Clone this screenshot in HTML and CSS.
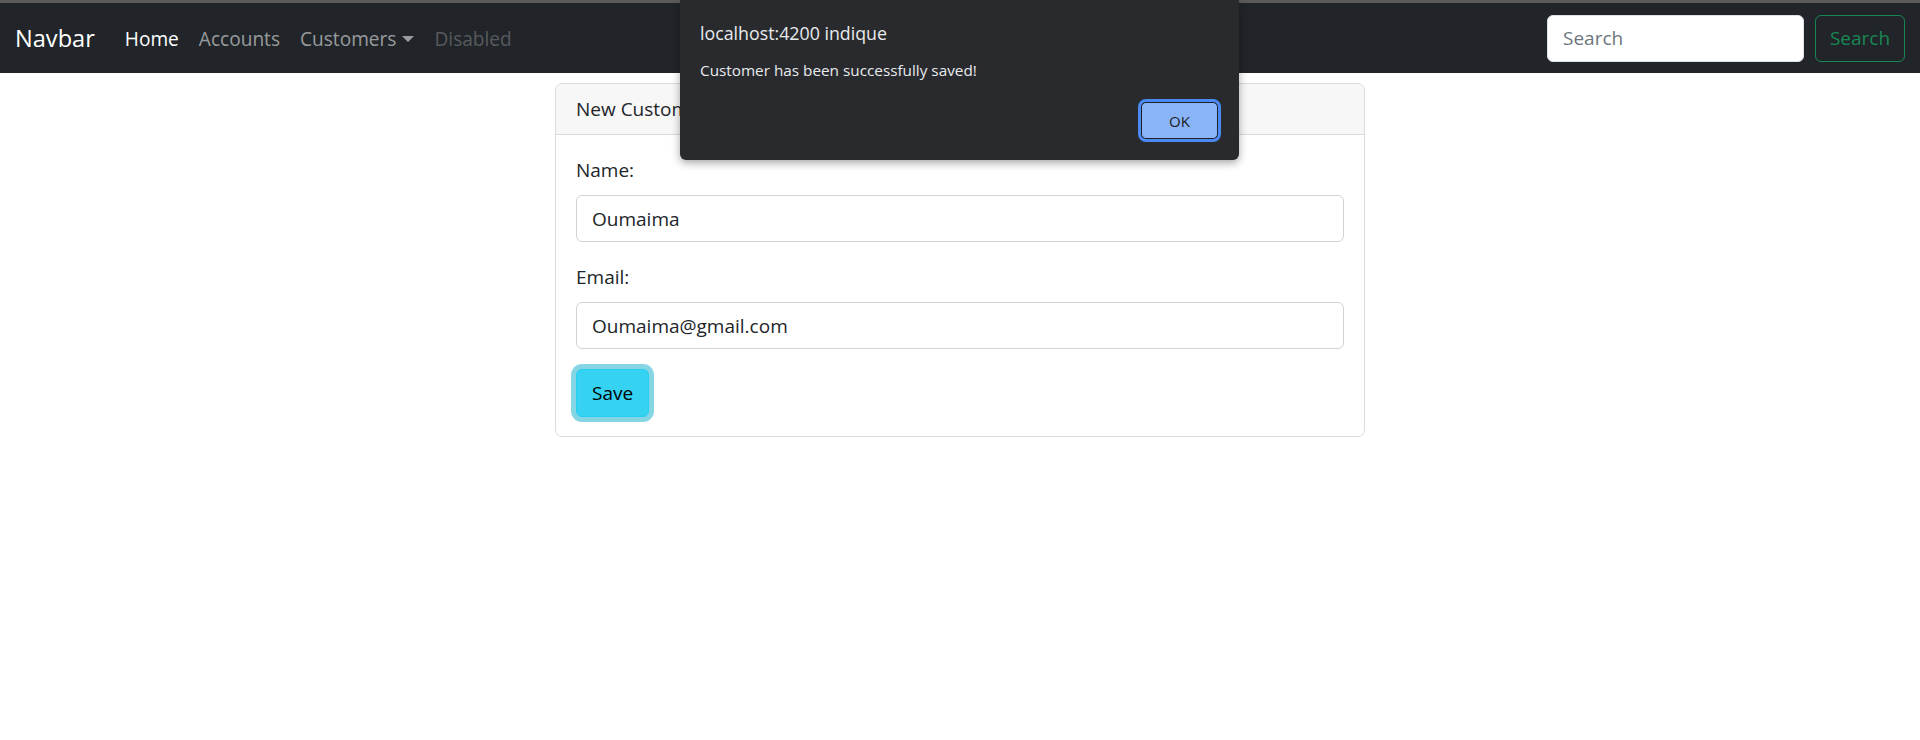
FILE: index.html
```html
<!DOCTYPE html>
<html lang="fr">
<head>
<meta charset="utf-8">
<title>Customers</title>
<link rel="stylesheet" href="styles.css">
</head>
<body>
<div class="chrome-top"></div>
<nav class="navbar">
  <a class="brand" href="#">Navbar</a>
  <ul class="nav">
    <li><a class="nav-link active" href="#">Home</a></li>
    <li><a class="nav-link" href="#">Accounts</a></li>
    <li><a class="nav-link dropdown-toggle" href="#">Customers</a></li>
    <li><a class="nav-link disabled">Disabled</a></li>
  </ul>
  <form class="search">
    <input class="search-input" type="search" placeholder="Search">
    <button class="btn-outline-success" type="button">Search</button>
  </form>
</nav>
<main class="page">
  <div class="card">
    <div class="card-header">New Customer</div>
    <div class="card-body">
      <form>
        <div class="field">
          <label class="form-label">Name:</label>
          <input class="form-control" type="text" value="Oumaima">
        </div>
        <div class="field">
          <label class="form-label">Email:</label>
          <input class="form-control" type="text" value="Oumaima@gmail.com">
        </div>
        <button class="btn-save" type="button">Save</button>
      </form>
    </div>
  </div>
</main>
<div class="alert-dialog">
  <div class="alert-title">localhost:4200 indique</div>
  <div class="alert-message">Customer has been successfully saved!</div>
  <div class="alert-actions">
    <button class="alert-ok" type="button">OK</button>
  </div>
</div>
</body>
</html>
```
FILE: styles.css
```css
* { box-sizing: border-box; }
html, body { margin: 0; padding: 0; }
body {
  font-family: "Open Sans", "Noto Sans", sans-serif;
  font-size: 19px;
  line-height: 30px;
  color: #212529;
  background: #fff;
  width: 1920px;
  height: 740px;
  overflow: hidden;
  position: relative;
}
.chrome-top { height: 3px; background: #5b5b5b; }
.navbar {
  height: 70px;
  background: #212529;
  display: flex;
  align-items: center;
  padding: 11px 15px 9px;
}
.brand {
  color: #fff;
  text-decoration: none;
  font-size: 23.6px;
  line-height: 37.5px;
  padding: 6px 0;
  margin-right: 20px;
}
.nav { list-style: none; margin: 0; padding: 0; display: flex; font-size: 19.1px; }
.nav-link {
  display: flex;
  align-items: center;
  padding: 10px 10px;
  color: rgba(255,255,255,.55);
  text-decoration: none;
}
.nav-link.active { color: #fff; }
.nav-link.disabled { color: rgba(255,255,255,.25); }
.dropdown-toggle::after {
  content: "";
  display: inline-block;
  margin-left: 6px;
  border-top: 6px solid rgba(255,255,255,.55);
  border-left: 6px solid transparent;
  border-right: 6px solid transparent;
}
.search { margin-left: auto; display: flex; gap: 11px; margin-top: -2px; }
.search-input {
  width: 257px;
  height: 47px;
  border: 1px solid #dee2e6;
  border-radius: 6px;
  padding: 7px 15px;
  font: inherit;
  color: #212529;
  background: #fff;
}
.search-input::placeholder { color: #6c757d; }
.btn-outline-success {
  height: 47px;
  width: 90px;
  background: transparent;
  border: 1px solid #198754;
  border-radius: 6px;
  color: #198754;
  font: inherit;
  padding: 0;
}
.page { padding-top: 10px; }
.card {
  width: 810px;
  margin: 0 auto;
  border: 1px solid #dadbdc;
  border-radius: 7px;
  overflow: hidden;
}
.card-header {
  background: #f7f7f7;
  border-bottom: 1px solid #dadbdc;
  padding: 10px 20px;
}
.card-body { padding: 20px 20px 19px; }
.field { margin-bottom: 20px; }
.form-label { display: block; margin-bottom: 10px; }
.form-control {
  display: block;
  width: 100%;
  height: 47px;
  padding: 7px 15px;
  font: inherit;
  color: #212529;
  border: 1px solid #ced4da;
  border-radius: 6px;
  background: #fff;
}
.btn-save {
  display: block;
  height: 48px;
  padding: 0 15px;
  font: inherit;
  color: #000;
  background: #35d3f1;
  border: 1px solid #25cff2;
  border-radius: 6px;
  box-shadow: 0 0 0 5px rgba(11,172,204,.5);
}
.alert-dialog {
  position: absolute;
  top: 0;
  left: 680px;
  width: 559px;
  height: 160px;
  background: #292a2d;
  border-radius: 0 0 6px 6px;
  box-shadow: 0 3px 8px rgba(0,0,0,.35);
  padding: 20px 21px 21px 20px;
  color: #e8eaed;
  z-index: 10;
  display: flex;
  flex-direction: column;
}
.alert-title { font-size: 17.8px; line-height: 26px; }
.alert-message { font-size: 15.3px; line-height: 20px; margin-top: 14px; }
.alert-actions { margin-top: 22px; display: flex; justify-content: flex-end; }
.alert-ok {
  width: 77px;
  height: 37px;
  background: #8ab4f8;
  border: 1px solid #202124;
  border-radius: 5px;
  outline: 3px solid #4a8af4;
  color: #202124;
  font-family: inherit;
  font-size: 15px;
  padding: 0;
}
```
